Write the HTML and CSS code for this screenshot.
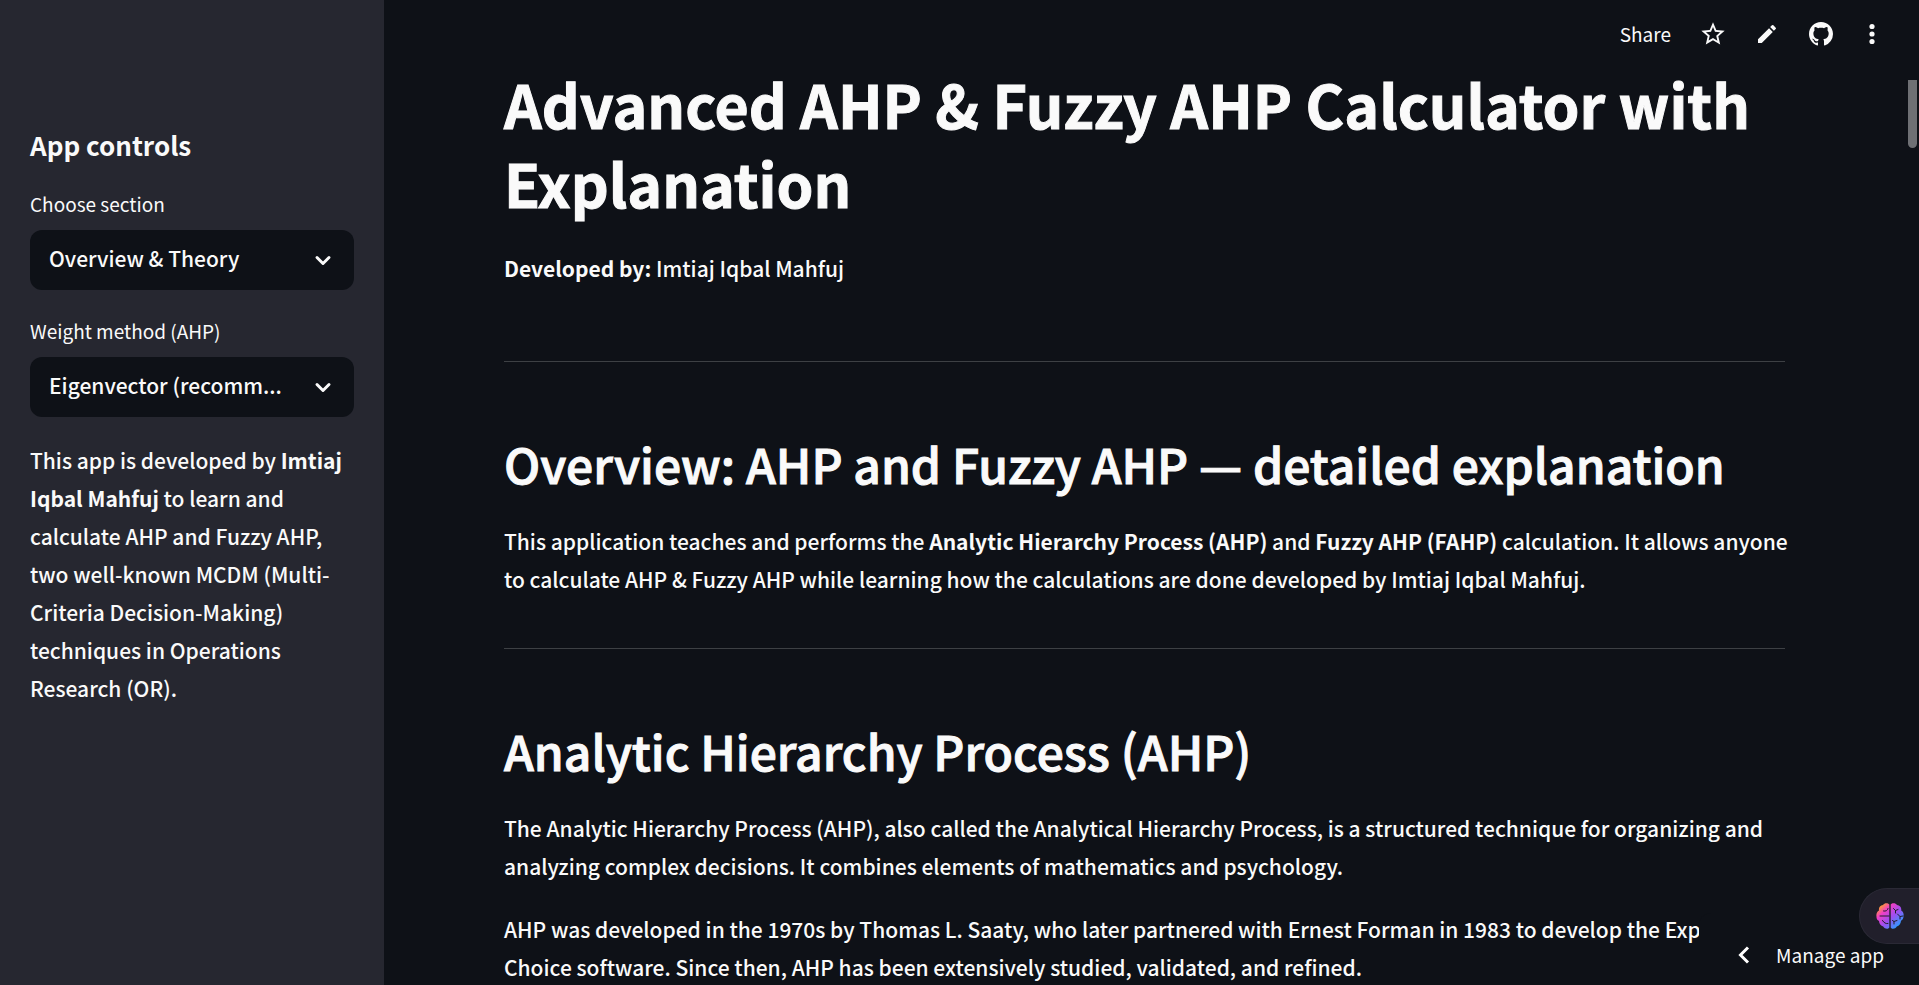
FILE: index.html
```html
<!DOCTYPE html>
<html lang="en">
<head>
<meta charset="utf-8">
<title>Advanced AHP &amp; Fuzzy AHP Calculator</title>
<link rel="stylesheet" href="styles.css">
</head>
<body>
<div class="app">
  <aside class="sidebar">
    <h2 class="sidebar-title">App controls</h2>
    <div class="field">
      <label class="field-label" for="section">Choose section</label>
      <div class="select-box">
        <select class="select" id="section">
          <option>Overview &amp; Theory</option>
        </select>
        <svg class="chevron" viewBox="0 0 24 24" aria-hidden="true"><path d="M6 9.5l6 6 6-6"/></svg>
      </div>
    </div>
    <div class="field">
      <label class="field-label" for="method">Weight method (AHP)</label>
      <div class="select-box">
        <select class="select" id="method">
          <option>Eigenvector (recomm...</option>
        </select>
        <svg class="chevron" viewBox="0 0 24 24" aria-hidden="true"><path d="M6 9.5l6 6 6-6"/></svg>
      </div>
    </div>
    <p class="text">This app is developed by <strong>Imtiaj Iqbal Mahfuj</strong> to learn and calculate AHP and Fuzzy AHP, two well-known MCDM (Multi-Criteria Decision-Making) techniques in Operations Research (OR).</p>
  </aside>

  <main class="main">
    <h1 class="title">Advanced AHP &amp; Fuzzy AHP Calculator with Explanation</h1>
    <p class="text byline"><strong>Developed by:</strong> Imtiaj Iqbal Mahfuj</p>
    <hr class="rule">
    <section class="section">
      <h2 class="heading">Overview: AHP and Fuzzy AHP — detailed explanation</h2>
      <p class="text">This application teaches and performs the <strong>Analytic Hierarchy Process (AHP)</strong> and <strong>Fuzzy AHP (FAHP)</strong> calculation. It allows anyone to calculate AHP &amp; Fuzzy AHP while learning how the calculations are done developed by Imtiaj Iqbal Mahfuj.</p>
    </section>
    <hr class="rule">
    <section class="section">
      <h2 class="heading">Analytic Hierarchy Process (AHP)</h2>
      <p class="text">The Analytic Hierarchy Process (AHP), also called the Analytical Hierarchy Process, is a structured technique for organizing and analyzing complex decisions. It combines elements of mathematics and psychology.</p>
      <p class="text">AHP was developed in the 1970s by Thomas L. Saaty, who later partnered with Ernest Forman in 1983 to develop the Expert Choice software. Since then, AHP has been extensively studied, validated, and refined.</p>
    </section>
  </main>

  <header class="toolbar">
    <button class="tool share" type="button">Share</button>
    <button class="tool" type="button" aria-label="Favorite">
      <svg class="icon icon-star" viewBox="0 0 24 24"><path d="M22 9.24l-7.19-.62L12 2 9.19 8.63 2 9.24l5.46 4.73L5.82 21 12 17.27 18.18 21l-1.63-7.03L22 9.24zM12 15.4l-3.76 2.27 1-4.28-3.32-2.88 4.38-.38L12 6.1l1.71 4.04 4.38.38-3.32 2.88 1 4.28L12 15.4z"/></svg>
    </button>
    <button class="tool" type="button" aria-label="Edit">
      <svg class="icon" viewBox="0 0 24 24"><path d="M3 17.25V21h3.75L17.81 9.94l-3.75-3.75L3 17.25zM20.71 7.04a1 1 0 0 0 0-1.41l-2.34-2.34a1 1 0 0 0-1.41 0l-1.83 1.83 3.75 3.75 1.83-1.83z"/></svg>
    </button>
    <button class="tool" type="button" aria-label="View source">
      <svg class="icon" viewBox="0 0 16 16"><path d="M8 0C3.58 0 0 3.58 0 8c0 3.54 2.29 6.53 5.47 7.59.4.07.55-.17.55-.38 0-.19-.01-.82-.01-1.49-2.01.37-2.53-.49-2.69-.94-.09-.23-.48-.94-.82-1.13-.28-.15-.68-.52-.01-.53.63-.01 1.08.58 1.23.82.72 1.21 1.87.87 2.33.66.07-.52.28-.87.51-1.07-1.78-.2-3.64-.89-3.64-3.95 0-.87.31-1.59.82-2.15-.08-.2-.36-1.02.08-2.12 0 0 .67-.21 2.2.82.64-.18 1.32-.27 2-.27s1.36.09 2 .27c1.53-1.04 2.2-.82 2.2-.82.44 1.1.16 1.92.08 2.12.51.56.82 1.27.82 2.15 0 3.07-1.87 3.75-3.65 3.95.29.25.54.73.54 1.48 0 1.07-.01 1.93-.01 2.2 0 .21.15.46.55.38A8.01 8.01 0 0 0 16 8c0-4.42-3.58-8-8-8z"/></svg>
    </button>
    <button class="tool menu" type="button" aria-label="Main menu">
      <svg class="icon" viewBox="0 0 24 24"><circle cx="12" cy="4.500" r="2.600"/><circle cx="12" cy="12" r="2.600"/><circle cx="12" cy="19.500" r="2.600"/></svg>
    </button>
  </header>

  <div class="scroll-thumb"></div>

  <button class="manage" type="button">
    <svg class="manage-icon" viewBox="0 0 12 18" aria-hidden="true"><path d="M10 1.500L2.500 9l7.500 7.500"/></svg>
    Manage app
  </button>

  <button class="brain-tab" type="button" aria-label="Assistant">
    <svg class="brain" viewBox="0 0 28 26">
      <defs>
        <linearGradient id="brain-fill" x1="0" y1="0" x2="1" y2="1">
          <stop offset="0.12" stop-color="#ff9f2e"/>
          <stop offset="0.3" stop-color="#f23fc4"/>
          <stop offset="0.55" stop-color="#a04df0"/>
          <stop offset="0.85" stop-color="#2f9bff"/>
        </linearGradient>
      </defs>
      <path fill="url(#brain-fill)" d="M13.300 1.500C12 0 8.500-.3 7 2 4 2.500 2.500 4.500 3 7.500 1 8.500 0 11 .5 13.500c-.2 2 .8 3.800 2.500 4.500.2 3 1.800 4.800 4.200 5.500 1.500 2.500 4.800 3 6.100 1zM14.700 1.500C16 0 19.500-.3 21 2c3 .5 4.700 2.500 4.200 5.500C27.200 8.500 28 11 27.500 13c.2 2-.8 3.800-2.500 4.800-.2 3-1.800 5-4.200 5.700-1.500 2.500-4.800 3-6.100 1z"/>
      <path class="brain-fold" d="M4 13h9M7.500 8c2.500.5 4-.5 4.500-2.500M6.500 17.500c1.500 2.500 3.500 3.500 5.500 3M17.500 5.500l2 2 2.500-1M19.500 7.500v2.500M21.500 11l2.500 2.500 3-.5M24 13.500v2.500M18 21v-2.500l-1.500-1M18 18.500l3-1"/>
    </svg>
  </button>
</div>
</body>
</html>
```
FILE: styles.css
```css
* {
  box-sizing: border-box;
}

body {
  margin: 0;
  background: #0e1117;
  color: #fafafa;
  font-family: "Noto Sans CJK SC", "Noto Sans", sans-serif;
  font-size: 21px;
  line-height: 38px;
}

button,
select {
  font: inherit;
  color: inherit;
  border: 0;
  padding: 0;
  background: none;
}

h1,
h2,
p {
  margin: 0;
}

.app {
  position: relative;
  display: flex;
  height: 100vh;
  overflow: hidden;
}

.sidebar {
  flex: 0 0 384px;
  display: flex;
  flex-direction: column;
  gap: 24px;
  padding: 127px 30px 0;
  background: #262730;
}

.sidebar-title {
  font-size: 26px;
  line-height: 36px;
  font-weight: 600;
}

.field-label {
  display: block;
  margin-bottom: 9px;
  font-size: 19px;
  line-height: 33px;
}

.field-label + .select-box {
  margin-top: 10px;
}

.select-box {
  position: relative;
}

.select {
  appearance: none;
  display: block;
  width: 100%;
  height: 60px;
  padding: 0 54px 4px 19px;
  border-radius: 12px;
  background: #0e1117;
  font-weight: 500;
}

.chevron {
  position: absolute;
  right: 19px;
  top: 18px;
  width: 24px;
  height: 24px;
  fill: none;
  stroke: #fafafa;
  stroke-width: 3;
  stroke-linecap: round;
  stroke-linejoin: round;
  pointer-events: none;
}

.text {
  line-height: 38px;
  font-weight: 500;
}

.text strong {
  font-weight: 700;
}

.text + .text {
  margin-top: 1px;
}

.main {
  flex: 1;
  padding: 64px 134px 0 120px;
}

.title {
  font-size: 59px;
  line-height: 79px;
  font-weight: 700;
  -webkit-text-stroke: 1px #fafafa;
}

.byline {
  padding: 27px 0 24px;
}

.rule {
  height: 1px;
  margin: 50px 0 70px;
  border: 0;
  background: #3d4044;
}

.section {
  display: flex;
  flex-direction: column;
  gap: 24px;
  margin-right: -6px;
}

.heading {
  padding-bottom: 3px;
  font-size: 48px;
  line-height: 63px;
  font-weight: 500;
  -webkit-text-stroke: 1px #fafafa;
}

.toolbar {
  position: absolute;
  top: 10px;
  right: 26px;
  display: flex;
  align-items: center;
  gap: 6px;
}

.tool {
  display: flex;
  align-items: center;
  justify-content: center;
  width: 48px;
  height: 48px;
  font-size: 19px;
}

.share {
  width: auto;
  padding: 0 12px;
}

.menu {
  width: 42px;
}

.icon {
  width: 24px;
  height: 24px;
  fill: #fafafa;
}

.icon-star {
  width: 28px;
  height: 28px;
}

.scroll-thumb {
  position: absolute;
  top: 80px;
  right: 2px;
  width: 9px;
  height: 68px;
  border-radius: 0 0 5px 5px;
  background: #6e7074;
}

.manage {
  position: absolute;
  right: 0;
  bottom: 0;
  display: flex;
  align-items: center;
  gap: 26px;
  height: 72px;
  padding: 12px 35px 0 39px;
  border-radius: 12px 0 0 0;
  background: #0e1117;
  font-size: 19px;
}

.manage-icon {
  width: 12px;
  height: 18px;
  fill: none;
  stroke: #fff;
  stroke-width: 3;
}

.brain-tab {
  position: absolute;
  right: 0;
  bottom: 41px;
  display: flex;
  align-items: center;
  width: 60px;
  height: 56px;
  padding-left: 16px;
  border: 1px solid #2a2935;
  border-right: 0;
  border-radius: 28px 0 0 28px;
  background: #211f2b;
}

.brain {
  width: 28px;
  height: 26px;
}

.brain-fold {
  fill: none;
  stroke: #211f2b;
  stroke-width: 1;
  stroke-linecap: round;
}
```
